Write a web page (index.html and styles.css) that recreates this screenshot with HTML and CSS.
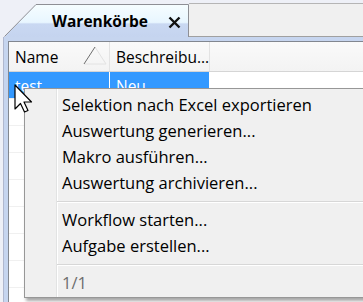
FILE: index.html
```html
<!DOCTYPE html>
<html lang="de">
<head>
    <meta charset="UTF-8">
    <title>Warenkörbe</title>
    <link rel="stylesheet" href="styles.css">
</head>
<body>
    <div class="tabstrip">
        <div class="tab">
            <svg class="tab-shape" width="185" height="33" viewBox="0 0 185 33">
                <defs>
                    <linearGradient id="tabfill" x1="0" y1="0" x2="0" y2="1">
                        <stop offset="0" stop-color="#f6fdff"/>
                        <stop offset="0.55" stop-color="#e8f6ff"/>
                        <stop offset="0.6" stop-color="#c9d8f2"/>
                        <stop offset="1" stop-color="#c5d4ef"/>
                    </linearGradient>
                </defs>
                <polygon points="0.5,33 32,0.5 184.5,0.5 184.5,33" fill="url(#tabfill)"/>
                <polyline points="0.5,32.5 32,0.5 184.5,0.5 184.5,33" fill="none" stroke="#8e8f95" stroke-width="1"/>
            </svg>
            <span class="tab-title">Warenkörbe</span>
            <svg class="tab-close" width="13" height="13" viewBox="0 0 13 13">
                <path d="M1.5 1.5 L11.5 11.5 M11.5 1.5 L1.5 11.5" stroke="#111" stroke-width="2.4"/>
            </svg>
        </div>
        <div class="tabrest"></div>
    </div>

    <div class="panel">
        <div class="grid">
            <div class="grid-head">
                <div class="col col-name">
                    <span>Name</span>
                    <svg class="sort" width="24" height="19" viewBox="0 0 24 19">
                        <path d="M12 1 L23 18 L1 18" fill="none" stroke="#e2e2e2" stroke-width="1"/>
                        <path d="M1 18 L12 1" fill="none" stroke="#6e6e6e" stroke-width="1"/>
                    </svg>
                </div>
                <div class="col col-desc">Beschreibu...</div>
                <div class="col-rest"></div>
            </div>
            <div class="row selected">
                <div class="col col-name">test</div>
                <div class="col col-desc">Neu</div>
                <div class="col-rest"></div>
            </div>
            <div class="row"><div class="col col-name"></div><div class="col col-desc"></div><div class="col-rest"></div></div>
            <div class="row"><div class="col col-name"></div><div class="col col-desc"></div><div class="col-rest"></div></div>
            <div class="row"><div class="col col-name"></div><div class="col col-desc"></div><div class="col-rest"></div></div>
            <div class="row"><div class="col col-name"></div><div class="col col-desc"></div><div class="col-rest"></div></div>
            <div class="row"><div class="col col-name"></div><div class="col col-desc"></div><div class="col-rest"></div></div>
            <div class="row"><div class="col col-name"></div><div class="col col-desc"></div><div class="col-rest"></div></div>
            <div class="row"><div class="col col-name"></div><div class="col col-desc"></div><div class="col-rest"></div></div>
        </div>
    </div>

    <div class="menu">
        <div class="item">Selektion nach Excel exportieren</div>
        <div class="item">Auswertung generieren...</div>
        <div class="item">Makro ausführen...</div>
        <div class="item">Auswertung archivieren...</div>
        <div class="sep"></div>
        <div class="item">Workflow starten...</div>
        <div class="item">Aufgabe erstellen...</div>
        <div class="sep"></div>
        <div class="item disabled">1/1</div>
    </div>

    <svg class="cursor" width="20" height="30" viewBox="0 0 20 30">
        <path d="M1 1 L1 25 L6.5 19.5 L10.5 28 L14 26.5 L10 18 L17.5 18 Z" fill="#fff" stroke="#000" stroke-width="1.2" stroke-linejoin="round"/>
    </svg>
</body>
</html>
```

FILE: styles.css
```css
body {
    margin: 0;
    font-family: "Open Sans", "Noto Sans", sans-serif;
    font-size: 15.5px;
    color: #1a1a1a;
    background: #eef0f7;
    width: 363px;
    height: 302px;
    overflow: hidden;
    position: relative;
}
.tabstrip {
    display: flex;
    height: 37px;
}
.tab {
    position: relative;
    margin-left: 4px;
    margin-top: 4px;
    width: 185px;
    height: 33px;
    flex: none;
    display: flex;
    align-items: center;
}
.tab-shape {
    position: absolute;
    left: 0;
    top: 0;
}
.tab-title {
    position: relative;
    margin-left: 48px;
    margin-top: 1px;
    font-weight: bold;
    font-size: 15.5px;
    color: #000;
}
.tab-close {
    position: relative;
    margin-left: 20px;
    margin-top: 3px;
}
.tabrest {
    flex: 1;
    margin-top: 3px;
    background: #f0f0f0;
    border-top: 1px solid #b5b5b5;
    border-bottom: 1px solid #a0a0a0;
}
.panel {
    margin-left: 3px;
    border-left: 1px solid #b0b8cf;
    background: #c6d5ef;
    padding: 4px 0 0 4px;
    height: 261px;
}
.grid {
    background: #fff;
    border-top: 1px solid #828790;
    border-left: 1px solid #828790;
    height: 260px;
    overflow: hidden;
}
.grid-head {
    display: flex;
    height: 29px;
    border-bottom: 1px solid #d5d5d5;
    background: linear-gradient(#fafafa, #f3f3f3);
}
.col {
    flex: none;
    box-sizing: border-box;
    padding-left: 6px;
    border-right: 1px solid #e3e3e3;
    white-space: nowrap;
    overflow: hidden;
}
.col-name {
    width: 101px;
}
.col-desc {
    width: 100px;
}
.col-rest {
    flex: 1;
}
.grid-head .col {
    display: flex;
    align-items: center;
    padding-top: 1px;
    color: #000;
}
.grid-head .col-name {
    justify-content: space-between;
    padding-right: 2px;
}
.sort {
    margin-top: -3px;
}
.row {
    display: flex;
    height: 26px;
    border-bottom: 1px solid #f0f0f0;
}
.row .col {
    line-height: 18px;
    padding-top: 5px;
    border-right-color: #f0f0f0;
}
.selected .col {
    background: #3399ff;
    color: #fff;
    border-right-color: #fff;
}
.menu {
    position: absolute;
    left: 24px;
    top: 88px;
    width: 340px;
    height: 210px;
    background: #f0f0f0;
    border: 1px solid #979797;
    box-shadow: 2px 3px 3px rgba(0, 0, 0, 0.35);
    padding-top: 3px;
    box-sizing: border-box;
    font-size: 16.5px;
    background-image: linear-gradient(to right, transparent 31px, #e2e3e3 31px, #e2e3e3 32px, #fff 32px, #fff 33px, transparent 33px);
}
.item {
    height: 26px;
    line-height: 26px;
    padding-left: 37px;
    color: #000;
    white-space: nowrap;
}
.item.disabled {
    color: #6d6d6d;
}
.sep {
    height: 11px;
    margin-left: 32px;
    background: linear-gradient(transparent 5px, #d7d7d7 5px, #d7d7d7 6px, #fff 6px, #fff 7px, transparent 7px);
}
.cursor {
    position: absolute;
    left: 14px;
    top: 84px;
}
```
